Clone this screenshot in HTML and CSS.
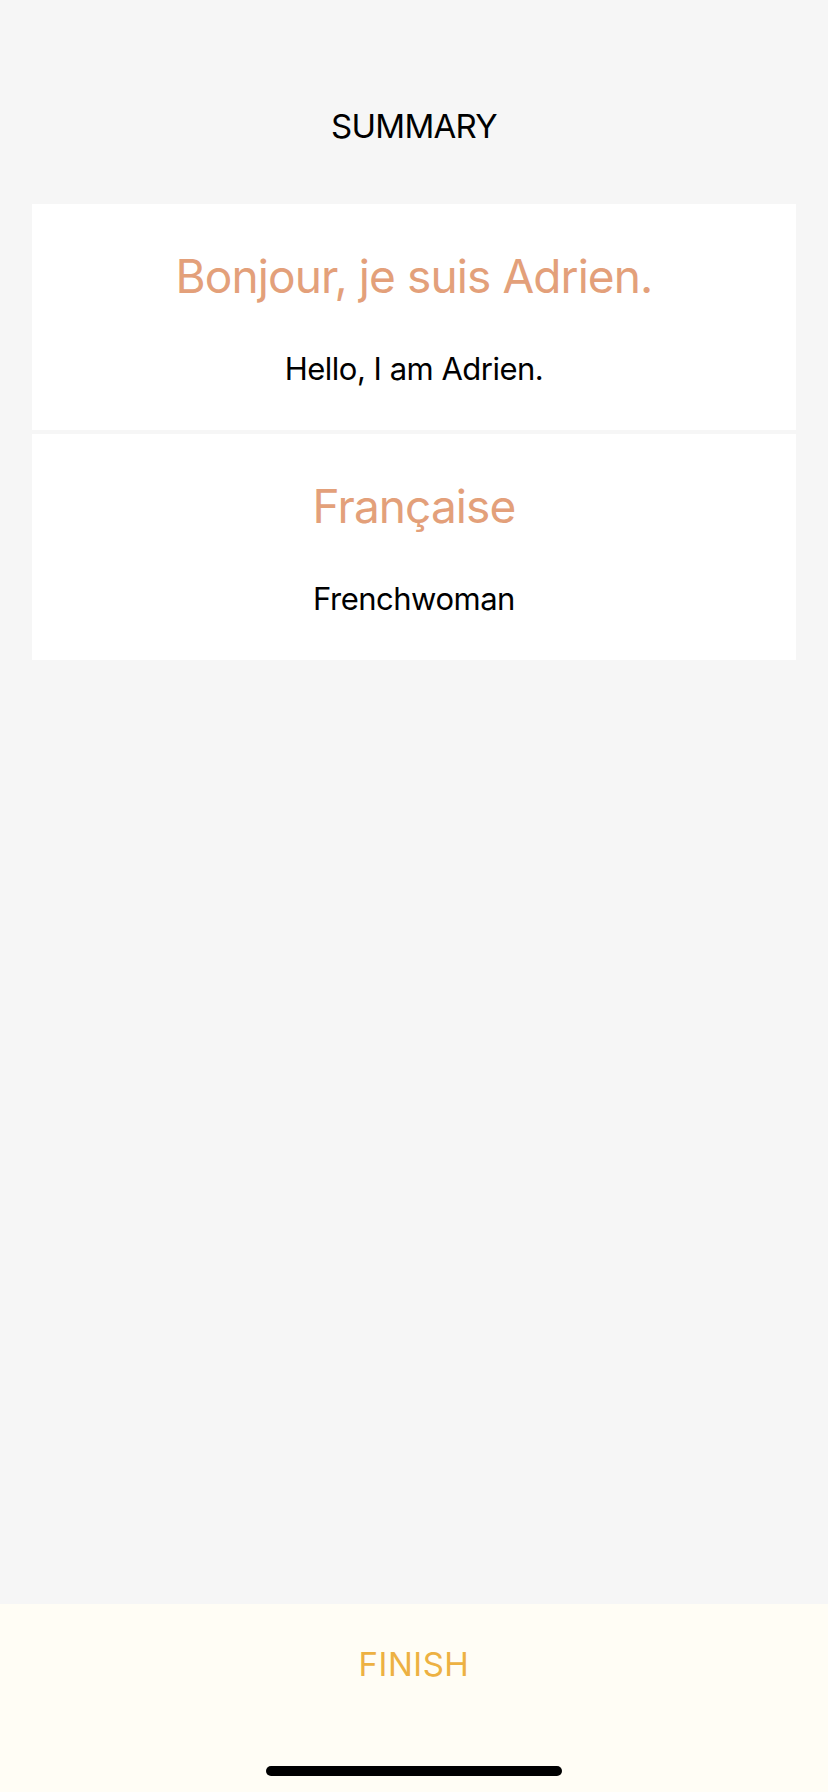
FILE: index.html
```html
<!DOCTYPE html>
<html lang="en">
<head>
<meta charset="utf-8">
<title>Summary</title>
<link rel="stylesheet" href="styles.css">
</head>
<body>
<div class="screen">
  <main class="content">
    <h1 class="page-title">SUMMARY</h1>
    <section class="cards">
      <article class="card">
        <h2 class="card-title">Bonjour, je suis Adrien.</h2>
        <p class="card-text">Hello, I am Adrien.</p>
      </article>
      <article class="card">
        <h2 class="card-title">Française</h2>
        <p class="card-text">Frenchwoman</p>
      </article>
    </section>
  </main>
  <footer class="footer">
    <button class="finish">FINISH</button>
    <div class="home-indicator"></div>
  </footer>
</div>
</body>
</html>
```

FILE: styles.css
```css
* { box-sizing: border-box; }
html, body {
  margin: 0;
  padding: 0;
}
body {
  background: #f6f6f6;
  font-family: Inter, "Noto Sans", "Liberation Sans", sans-serif;
  color: #000;
}
.screen {
  width: 828px;
  height: 1792px;
  display: flex;
  flex-direction: column;
}
.content {
  flex: 1;
  display: flex;
  flex-direction: column;
  padding: 106px 32px 0;
}
.page-title {
  margin: 0;
  font-size: 33px;
  line-height: 40px;
  font-weight: 400;
  letter-spacing: -0.7px;
  text-align: center;
}
.cards {
  margin-top: 58px;
  display: flex;
  flex-direction: column;
  gap: 4px;
}
.card {
  background: #fff;
  height: 226px;
  padding-top: 43px;
  display: flex;
  flex-direction: column;
  align-items: center;
}
.card-title {
  margin: 0;
  font-size: 46px;
  line-height: 58px;
  font-weight: 400;
  letter-spacing: -0.9px;
  color: #e3a07a;
}
.card-text {
  margin: 44px 0 0;
  font-size: 31px;
  line-height: 40px;
  letter-spacing: -0.5px;
  color: #000;
}
.footer {
  height: 188px;
  background: #fffdf5;
  display: flex;
  flex-direction: column;
  align-items: center;
  padding-top: 40px;
}
.finish {
  border: 0;
  background: none;
  padding: 0;
  font-family: inherit;
  font-size: 33px;
  line-height: 40px;
  letter-spacing: 0.5px;
  color: #edb142;
}
.home-indicator {
  margin-top: 82px;
  width: 296px;
  height: 10px;
  border-radius: 5px;
  background: #000;
}
```
